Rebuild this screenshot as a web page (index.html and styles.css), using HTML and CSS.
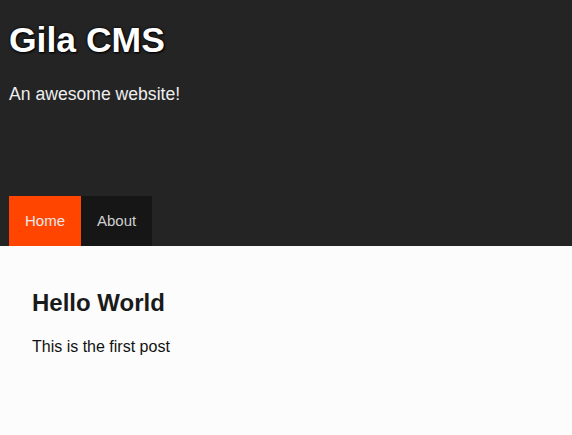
FILE: index.html
```html
<!DOCTYPE html>
<html>
<head>
<meta charset="utf-8">
<title>Gila CMS</title>
<link rel="stylesheet" href="styles.css">
</head>
<body>
<header class="site-header">
  <div class="brand">
    <h1 class="site-title">Gila CMS</h1>
    <p class="site-desc">An awesome website!</p>
  </div>
  <nav class="main-nav">
    <a class="nav-link active" href="#">Home</a>
    <a class="nav-link" href="#">About</a>
  </nav>
</header>
<main class="content">
  <h2 class="post-title">Hello World</h2>
  <p class="post-text">This is the first post</p>
</main>
</body>
</html>
```
FILE: styles.css
```css
html, body {
  margin: 0;
  padding: 0;
  background: #fcfcfc;
  font-family: "Liberation Sans", Arial, sans-serif;
}
.site-header {
  background: #242424;
  height: 246px;
  padding: 0 9px;
  box-sizing: border-box;
  display: flex;
  flex-direction: column;
}
.brand {
  padding-top: 20px;
}
.site-title {
  margin: 0;
  font-size: 35.5px;
  font-weight: bold;
  line-height: 40px;
  color: #ffffff;
  text-shadow: 0 0 3px #000, 1px 1px 2px #000;
}
.site-desc {
  margin: 24px 0 0;
  font-size: 17.6px;
  line-height: 21px;
  color: #eeeeee;
}
.main-nav {
  margin-top: auto;
  display: flex;
}
.nav-link {
  display: block;
  padding: 0 16px;
  line-height: 50px;
  font-size: 15px;
  color: #d0d0d0;
  background: #161616;
  text-decoration: none;
}
.nav-link.active {
  background: #ff4500;
  color: #e8e8e8;
}
.content {
  padding: 43px 32px;
}
.post-title {
  margin: 0;
  font-size: 24px;
  line-height: 28px;
  font-weight: bold;
  color: #1a1a1a;
}
.post-text {
  margin: 21px 0 0;
  font-size: 16px;
  line-height: 18px;
  color: #111111;
}
```
